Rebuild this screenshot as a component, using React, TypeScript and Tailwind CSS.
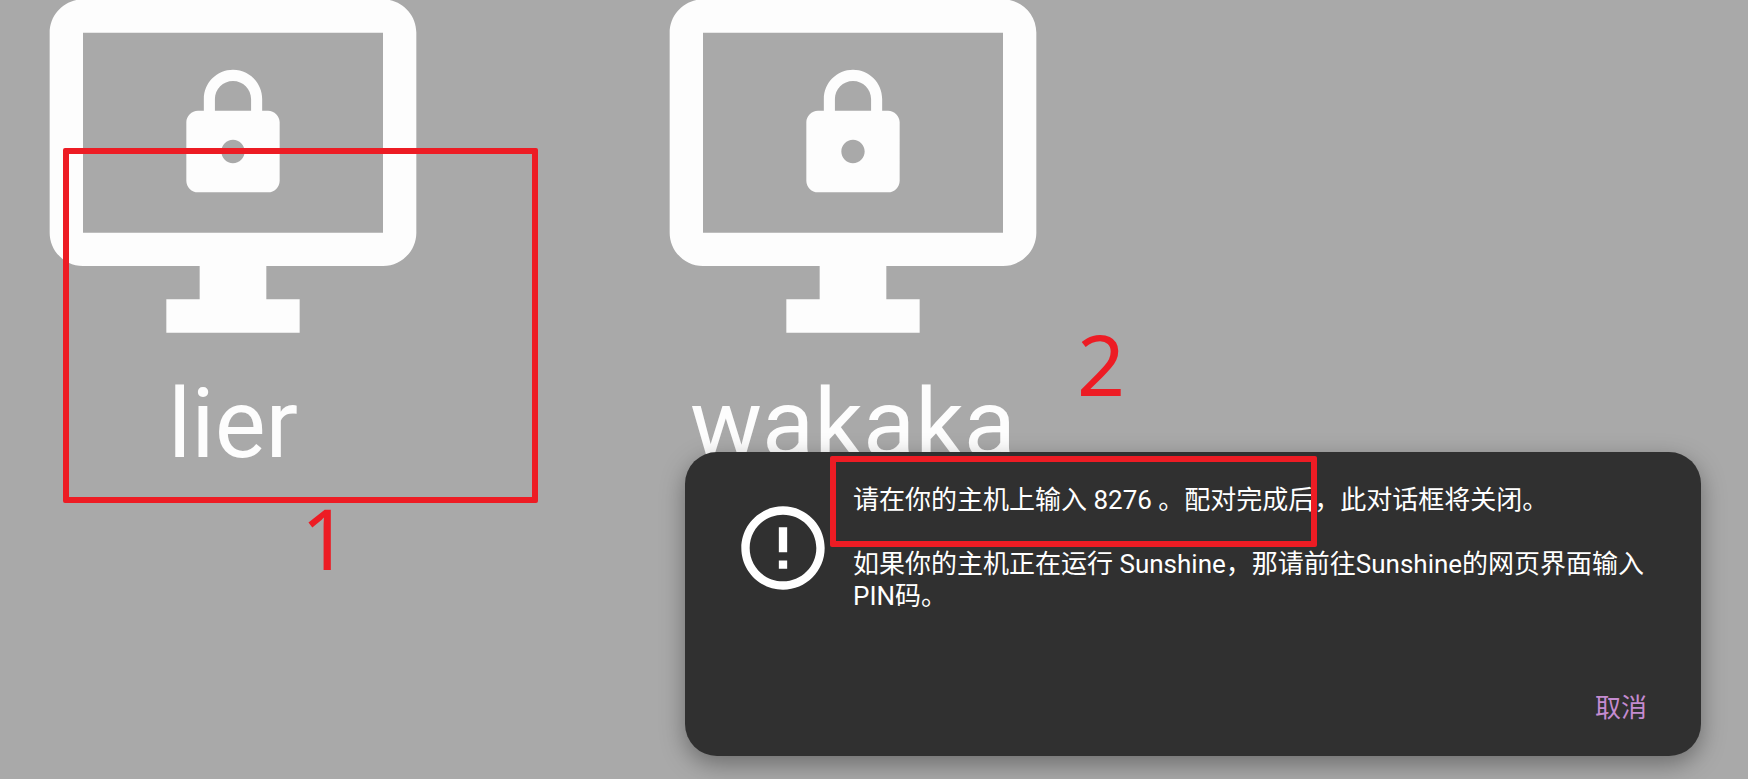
import React from "react";

const hosts = ["lier", "wakaka"];

function HostIcon() {
  return (
    <span className="grid place-items-center">
      <svg viewBox="0 0 24 24" className="col-start-1 row-start-1 size-[400px]" fill="currentColor" aria-hidden="true">
        <path d="M21 2H3c-1.1 0-2 .9-2 2v12c0 1.1.9 2 2 2h7v2H8v2h8v-2h-2v-2h7c1.1 0 2-.9 2-2V4c0-1.1-.9-2-2-2zm0 14H3V4h18v12z" />
      </svg>
      <svg viewBox="0 0 24 24" className="col-start-1 row-start-1 mb-16 size-[140px]" fill="currentColor" aria-hidden="true">
        <path d="M18 8h-1V6c0-2.76-2.24-5-5-5S7 3.24 7 6v2H6c-1.1 0-2 .9-2 2v10c0 1.1.9 2 2 2h12c1.1 0 2-.9 2-2V10c0-1.1-.9-2-2-2zm-6 9c-1.1 0-2-.9-2-2s.9-2 2-2 2 .9 2 2-.9 2-2 2zm3.1-9H8.9V6c0-1.71 1.39-3.1 3.1-3.1 1.71 0 3.1 1.39 3.1 3.1v2z" />
      </svg>
    </span>
  );
}

function HostTile({ name }: { name: string }) {
  return (
    <button type="button" className="flex w-[400px] flex-col items-center gap-0.5 text-[#fdfdfd]">
      <HostIcon />
      <span className="text-8xl leading-[112px]">{name}</span>
    </button>
  );
}

function PairingDialog() {
  return (
    <div
      role="dialog"
      aria-labelledby="pairing-text"
      className="absolute top-[452px] right-[47px] flex w-[1016px] flex-col rounded-[32px] bg-[#303030] px-12 py-8 text-[26px] leading-8 text-white shadow-[0_8px_24px_rgba(0,0,0,0.36)]"
    >
      <div className="flex items-center gap-5">
        <svg viewBox="0 0 24 24" className="size-[100px] shrink-0" fill="currentColor" aria-hidden="true">
          <path d="M11 15h2v2h-2zm0-8h2v6h-2zm.99-5C6.47 2 2 6.48 2 12s4.47 10 9.99 10C17.52 22 22 17.52 22 12S17.52 2 11.99 2zM12 20c-4.42 0-8-3.58-8-8s3.58-8 8-8 8 3.58 8 8-3.58 8-8 8z" />
        </svg>
        <div id="pairing-text" className="flex flex-col gap-8">
          <p>请在你的主机上输入 8276 。配对完成后，此对话框将关闭。</p>
          <p>如果你的主机正在运行 Sunshine，那请前往Sunshine的网页界面输入PIN码。</p>
        </div>
      </div>
      <button type="button" className="mt-20 self-end px-1.5 text-[#c48bd0]">
        取消
      </button>
    </div>
  );
}

export default function App() {
  return (
    <main
      lang="zh-CN"
      className="relative min-h-screen overflow-hidden bg-[#a9a9a9] font-['Roboto','Noto_Sans_CJK_SC',sans-serif]"
    >
      <div className="-mt-[34px] flex gap-[220px] pl-[33px]">
        {hosts.map((name) => (
          <HostTile key={name} name={name} />
        ))}
      </div>

      <PairingDialog />

      <div className="absolute top-[148px] left-[63px] h-[355px] w-[475px] rounded-xs border-6 border-[#ed1c24]" />
      <div className="absolute top-[456px] left-[830px] h-[91px] w-[487px] rounded-xs border-6 border-[#ed1c24]" />
      <span className="absolute top-[497px] left-[301px] font-['Noto_Sans',sans-serif] text-[84px] leading-[82px] text-[#ed1c24]">1</span>
      <span className="absolute top-[323px] left-[1077px] font-['Noto_Sans',sans-serif] text-[84px] leading-[82px] text-[#ed1c24]">2</span>
    </main>
  );
}
